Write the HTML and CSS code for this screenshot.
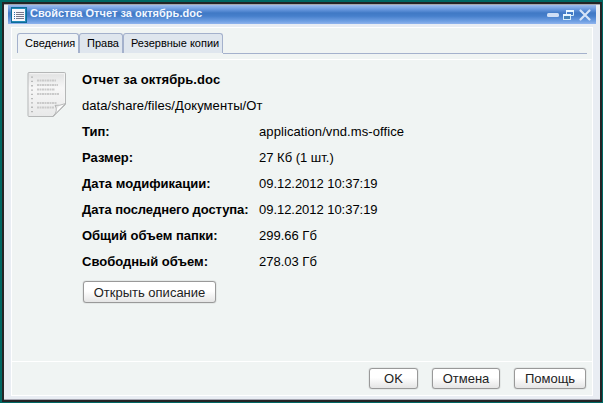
FILE: index.html
```html
<!DOCTYPE html>
<html lang="ru">
<head>
<meta charset="utf-8">
<title>Свойства</title>
<link rel="stylesheet" href="styles.css">
</head>
<body>
<div class="window">
  <div class="frame">
    <header class="titlebar">
      <svg class="app-icon" width="16" height="16" viewBox="0 0 16 16" shape-rendering="crispEdges">
        <rect width="16" height="16" fill="#0d6c98"/>
        <rect x="1" y="1" width="14" height="14" fill="#258bb8"/>
        <rect x="1" y="2" width="13" height="12" fill="#f7f7fb"/>
        <path d="M3 5.500h1M3 7.500h1M3 9.500h1M3 11.500h1" stroke="#286bac"/>
        <path d="M5 5.500h8M5 7.500h8M5 9.500h8M5 11.500h8" stroke="#77778a"/>
      </svg>
      <h1 class="title">Свойства Отчет за октябрь.doc</h1>
      <svg class="controls" width="46" height="16" viewBox="0 0 46 16">
        <rect x="0" y="6" width="12" height="4" rx="1.500" fill="#cfdff6"/>
        <path d="M19.500 7V3.500h7v5H24" fill="none" stroke="#d5ecfa"/>
        <path d="M19 4h8" stroke="#e8f6ff" stroke-width="2"/>
        <rect x="16.500" y="7.500" width="7" height="5" fill="#4382b8" stroke="#d5ecfa"/>
        <path d="M16 8h8" stroke="#e8f6ff" stroke-width="2"/>
        <path d="M33.500 3.500l9 9M42.500 3.500l-9 9" stroke="#d5e3f8" stroke-width="2.200" stroke-linecap="round"/>
      </svg>
    </header>
    <main class="panel">
      <nav class="tabs">
        <span class="tab active">Сведения</span>
        <span class="tab rights">Права</span>
        <span class="tab backups">Резервные копии</span>
        <span class="tab-line"></span>
      </nav>
      <section class="content">
        <svg class="doc-icon" width="40" height="46" viewBox="0 0 40 46">
          <defs>
            <linearGradient id="paper" x1="0" y1="0" x2="0" y2="1"><stop offset="0" stop-color="#e0e1e1"/><stop offset=".35" stop-color="#f7f7f7"/><stop offset="1" stop-color="#e8e9e9"/></linearGradient>
            <linearGradient id="fold" x1="0" y1="0" x2="1" y2="1"><stop offset="0" stop-color="#999"/><stop offset=".4" stop-color="#fff"/><stop offset="1" stop-color="#c2c2c2"/></linearGradient>
          </defs>
          <path d="M2 .5h35.500q1 0 1 1V32.500L26 44.500H2q-1 0-1-1v-42Q1 .5 2 .5z" fill="url(#paper)" stroke="#b5b7b7"/>
          <path d="M2.500 1.700h35v30" fill="none" stroke="#f5f5f5"/>
          <path d="M5 4.500v38" stroke="#9b9d9d" stroke-width="1.300" stroke-dasharray="1.300 3"/>
          <g stroke="#cacaca" stroke-width="2" stroke-dasharray="2 .5">
            <path d="M10 8.500h19M10 13h21M10 17.500h18M10 22h22M10 31h20M10 35.500h17"/>
          </g>
          <path d="M38.500 31.500q-6 2.500-10.500 1.800Q31.500 39 26 44.500z" fill="url(#fold)" stroke="#aaabab" stroke-width=".8"/>
        </svg>
        <div class="info">
          <div class="details">
            <strong class="wide name">Отчет за октябрь.doc</strong>
            <span class="wide path">data/share/files/Документы/От</span>
            <strong>Тип:</strong><span class="mime">application/vnd.ms-office</span>
            <strong>Размер:</strong><span>27 Кб (1 шт.)</span>
            <strong>Дата модификации:</strong><span class="date">09.12.2012 10:37:19</span>
            <strong class="accessed">Дата последнего доступа:</strong><span class="date">09.12.2012 10:37:19</span>
            <strong class="folder">Общий объем папки:</strong><span>299.66 Гб</span>
            <strong>Свободный объем:</strong><span>278.03 Гб</span>
          </div>
          <button class="button describe">Открыть описание</button>
        </div>
      </section>
      <footer class="footer">
        <button class="button ok">OK</button>
        <button class="button cancel">Отмена</button>
        <button class="button help">Помощь</button>
      </footer>
    </main>
  </div>
</div>
</body>
</html>
```
FILE: styles.css
```css
* { box-sizing: border-box; }
body {
  margin: 0;
  background: #006864;
  font: 13px "Liberation Sans", Arial, sans-serif;
  color: #000;
}
.window {
  width: 603px;
  height: 403px;
  padding: 2px 1px 1px 2px;
}
.frame {
  height: 400px;
  border: 2px solid #242426;
  padding: 0 4px 2px;
  background: #e9edf3;
  box-shadow: inset 0 1px #a5a7ae, inset 0 -1px #a7a7b2;
  display: flex;
  flex-direction: column;
}
.titlebar {
  height: 19px;
  flex: none;
  margin-top: 1px;
  padding: 2px 3px 0 3px;
  display: flex;
  background: linear-gradient(#9cbced 0, #6b9ae0 22%, #4079c5 42%, #467fcb 58%, #6e9ee2 85%, #90b4ee 100%);
}
.title {
  margin: -1px 0 0 3px;
  flex: 1;
  font-size: 11px;
  line-height: 15px;
  letter-spacing: .02px;
  color: #f2f7ff;
  white-space: nowrap;
}
.app-icon, .controls { flex: none; }
.panel {
  flex: 1;
  min-height: 0;
  margin: 3px 3px 2px;
  border: 1px solid #fff;
  background: #f0f4f3;
  display: flex;
  flex-direction: column;
}
.tabs {
  height: 32px;
  flex: none;
  display: flex;
  padding: 5px 5px 5px;
  border-bottom: 1px solid #fff;
}
.tab {
  height: 20px;
  border: 1px solid #a4b1cc;
  border-bottom: 0;
  border-radius: 3px 3px 0 0;
  background: #dfe6ee;
  padding: 0 0 0 7px;
  font-size: 11px;
  line-height: 19px;
  white-space: nowrap;
}
.active { width: 62px; background: #eff3f5; }
.rights { width: 44px; }
.backups { width: 100px; }
.tab-line { flex: 1; height: 21px; border-bottom: 1px solid #a4b1cc; }
.content {
  flex: 1;
  min-height: 0;
  display: flex;
  padding: 7px 0 0 15px;
}
.doc-icon { flex: none; margin-top: 5px; }
.info { margin-left: 15px; }
.details {
  display: grid;
  grid-template-columns: 177px auto;
  grid-auto-rows: 26px;
  line-height: 26px;
  white-space: nowrap;
}
.wide { grid-column: span 2; }
.name { letter-spacing: .05px; }
.path { letter-spacing: .07px; }
.mime { letter-spacing: .09px; }
.date { letter-spacing: -.04px; }
.accessed { letter-spacing: -.09px; }
.folder { letter-spacing: -.03px; }
.button {
  height: 22px;
  padding: 0;
  border: 1px solid #999;
  border-radius: 3px;
  background: linear-gradient(#fff 45%, #e5e5e5);
  box-shadow: 0 0 1px #777;
  color: #222;
  font: 13px/19px "Liberation Sans", Arial, sans-serif;
}
.describe { width: 133px; margin: 6px 0 0 1px; }
.footer {
  height: 34px;
  flex: none;
  display: flex;
  justify-content: flex-end;
  align-items: flex-start;
  gap: 14px;
  padding: 6px 6px 0;
  border-top: 1px solid #fff;
}
.footer .button { height: 21px; }
.ok { width: 49px; }
.cancel { width: 68px; }
.help { width: 72px; }
```
